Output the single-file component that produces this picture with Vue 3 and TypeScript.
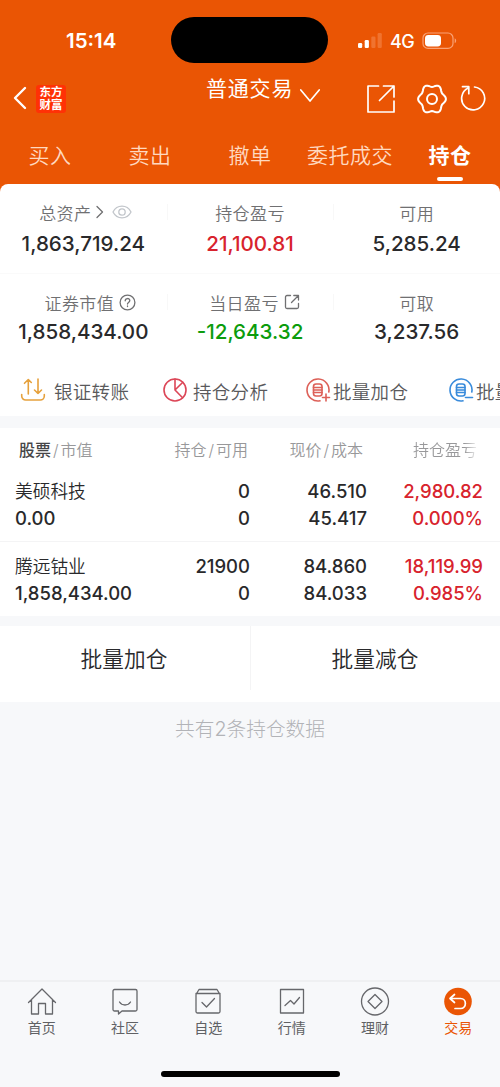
<script setup lang="ts">
interface Metric { label: string; value: string; tone?: string; icon?: string }
interface Holding { name: string; marketValue: string; qty: string; usable: string; price: string; cost: string; profit: string; rate: string }

const tabs: string[] = ['买入', '卖出', '撤单', '委托成交', '持仓']
const activeTab = '持仓'

const metricRows: Metric[][] = [
  [
    { label: '总资产', value: '1,863,719.24', icon: 'eye' },
    { label: '持仓盈亏', value: '21,100.81', tone: 'up' },
    { label: '可用', value: '5,285.24' },
  ],
  [
    { label: '证券市值', value: '1,858,434.00', icon: 'help' },
    { label: '当日盈亏', value: '-12,643.32', tone: 'down', icon: 'share' },
    { label: '可取', value: '3,237.56' },
  ],
]

const actions = [
  { label: '银证转账', icon: 'transfer' },
  { label: '持仓分析', icon: 'pie' },
  { label: '批量加仓', icon: 'plus' },
  { label: '批量减仓', icon: 'minus' },
]

const holdings: Holding[] = [
  { name: '美硕科技', marketValue: '0.00', qty: '0', usable: '0', price: '46.510', cost: '45.417', profit: '2,980.82', rate: '0.000%' },
  { name: '腾远钴业', marketValue: '1,858,434.00', qty: '21900', usable: '0', price: '84.860', cost: '84.033', profit: '18,119.99', rate: '0.985%' },
]

const nav = ['首页', '社区', '自选', '行情', '理财', '交易']

// Six rounded teeth around the settings wheel
const gearPath = 'M' + Array.from({ length: 72 }, (_, i) => {
  const a = (i / 72) * Math.PI * 2
  const r = 12.6 + 1.3 * Math.cos(6 * a)
  return `${(15 + r * Math.cos(a)).toFixed(2)} ${(15 + r * 1.07 * Math.sin(a)).toFixed(2)}`
}).join('L') + 'Z'
</script>

<template>
  <div class="screen">
    <header class="top">
      <div class="status">
        <span class="time">15:14</span>
        <span class="island"></span>
        <div class="signals">
          <svg width="26" height="18" viewBox="0 0 26 18">
            <rect x="1" y="11" width="4.2" height="5" rx="1.2" fill="#fff" />
            <rect x="7.7" y="8" width="4.2" height="8" rx="1.2" fill="#fff" />
            <rect x="14.3" y="4.5" width="4.2" height="11.5" rx="1.2" fill="#f0732f" />
            <rect x="20.6" y="1" width="4.2" height="15" rx="1.2" fill="#f0732f" />
          </svg>
          <span class="net">4G</span>
          <svg width="36" height="18" viewBox="0 0 36 18">
            <rect x="1" y="1" width="30" height="15.4" rx="5" fill="none" stroke="#f9a276" stroke-width="1.2" />
            <rect x="3" y="3" width="16" height="11.4" rx="3.4" fill="#fff" />
            <path d="M32.7 6.3c2 1 2 4 0 5z" fill="#f9a276" />
          </svg>
        </div>
      </div>

      <div class="titlebar">
        <svg class="back" width="14" height="24" viewBox="0 0 14 24"><path d="M12 2 2 12l10 10" /></svg>
        <span class="logo">东方<br>财富</span>
        <div class="title">
          <span>普通交易</span>
          <svg width="22" height="16" viewBox="0 0 22 16"><path d="m1.8 2 9.2 11 9.2-11" /></svg>
        </div>
        <svg class="i-share" width="30" height="30" viewBox="0 0 30 30"><path d="M12.5 2H2v26h26V17M17.5 2H28v11M28 2 13.500 16.500" /></svg>
        <svg class="i-gear" width="30" height="30" viewBox="0 0 30 30">
          <path :d="gearPath" />
          <circle cx="15" cy="15" r="5" />
        </svg>
        <svg class="i-refresh" width="28" height="28" viewBox="0 0 28 28"><path d="M15.500 3A11.500 11.500 0 1 1 9.300 4M3.500 2.700h6.300v7" /></svg>
      </div>

      <nav class="tabs">
        <span v-for="t in tabs" :key="t" class="tab" :class="{ active: t === activeTab }">{{ t }}</span>
      </nav>
    </header>

    <main>
      <section class="assets">
        <div v-for="(row, i) in metricRows" :key="i" class="metric-row">
          <div v-for="m in row" :key="m.label" class="metric">
            <div class="label" :class="m.icon">
              <span>{{ m.label }}</span>
              <template v-if="m.icon === 'eye'">
                <svg class="arrow" width="8" height="14" viewBox="0 0 8 14"><path d="m1 1.500 5.500 5.500L1 12.500" /></svg>
                <svg class="eye-mark" width="20" height="14" viewBox="0 0 20 14"><path d="M1 7c4-7.800 14-7.800 18 0-4 7.800-14 7.800-18 0z" /><circle cx="10" cy="7" r="3.200" /></svg>
              </template>
              <svg v-if="m.icon === 'help'" class="mark" width="17" height="17" viewBox="0 0 17 17"><circle cx="8.500" cy="8.500" r="7.400" /><path d="M6.200 6.800c0-3 4.600-3 4.600-.2 0 1.800-2.300 1.800-2.300 3.400M8.500 12v.6" /></svg>
              <svg v-if="m.icon === 'share'" class="mark" width="16" height="16" viewBox="0 0 16 16"><path d="M6.500 1.500H3A1.500 1.500 0 0 0 1.500 3v10A1.500 1.500 0 0 0 3 14.500h10a1.500 1.500 0 0 0 1.500-1.500V9.500M9.800 1.500h4.700v4.500M14.500 1.500 7.500 8.500" /></svg>
            </div>
            <div class="value" :class="m.tone">{{ m.value }}</div>
          </div>
        </div>
        <div class="actions">
          <div v-for="a in actions" :key="a.label" class="action" :class="a.icon">
            <svg width="26" height="26" viewBox="0 0 26 26">
              <template v-if="a.icon === 'transfer'">
                <path d="M1.700 17.500v1.500a4 4 0 0 0 4 4h14.600a4 4 0 0 0 4-4v-1.500M8.300 17V2.500M4.500 6.300l3.800-3.800 3 3M18 2v14.500M14.500 13l3.500 3.500 3.500-3.500" />
              </template>
              <template v-else-if="a.icon === 'pie'">
                <circle cx="13" cy="13" r="11" /><path d="M13 2v11l7.600 7.800M13 13l7.800-7.800" />
              </template>
              <template v-else>
                <path d="M15 23.800A11 11 0 1 1 23.800 15" />
                <rect x="8.500" y="7" width="8.500" height="12" rx="2.500" /><path d="M8.500 10.500h8.500M8.500 13h8.500M8.500 15.500h8.500" />
                <path :d="a.icon === 'plus' ? 'M17.500 20.500h7M21 17v7' : 'M17.500 20.500h7'" />
              </template>
            </svg>
            <span>{{ a.label }}</span>
          </div>
        </div>
      </section>

      <section class="table">
        <div class="thead">
          <span><b>股票</b><i>/</i>市值</span>
          <span>持仓<i>/</i>可用</span>
          <span>现价<i>/</i>成本</span>
          <span class="fade">持仓盈亏</span>
        </div>
        <div v-for="h in holdings" :key="h.name" class="holding">
          <span class="name">{{ h.name }}</span><span>{{ h.qty }}</span><span>{{ h.price }}</span><span class="up">{{ h.profit }}</span>
          <span class="left">{{ h.marketValue }}</span><span>{{ h.usable }}</span><span>{{ h.cost }}</span><span class="up">{{ h.rate }}</span>
        </div>
      </section>

      <section class="batch">
        <div>批量加仓</div>
        <div>批量减仓</div>
      </section>
      <p class="count">共有2条持仓数据</p>
    </main>

    <footer class="bottom">
      <div class="nav">
        <div v-for="(n, i) in nav" :key="n" class="nav-item" :class="{ current: i === 5 }">
          <svg width="30" height="30" viewBox="0 0 30 30">
            <path v-if="i === 0" d="M1.500 15.500 15 2l13.500 13.500M4.500 12.500V27h7V16.500h7V27h7V12.500" />
            <path v-else-if="i === 1" d="M4.500 2.500h21a1.500 1.500 0 0 1 1.500 1.500v18.500a1.500 1.500 0 0 1-1.500 1.500H12l-3.500 3v-3h-4A1.500 1.500 0 0 1 3 22.500V4a1.500 1.500 0 0 1 1.500-1.500zM9.500 15c2.500 4 8.500 4 11 0" />
            <path v-else-if="i === 2" d="M3 7.500 6 2.500h18l3 5M3 6.500h24V24.500a1.500 1.500 0 0 1-1.500 1.500h-21A1.500 1.500 0 0 1 3 24.500zM9 15.500l4.500 4.500 8-8.500" />
            <path v-else-if="i === 3" d="M3.500 2.500h23v23.500h-23zM8 18.500l5.500-5 3.500 3.500 5.500-6.500" />
            <template v-else-if="i === 4"><circle cx="15" cy="14.500" r="13.500" /><path d="m15 7.500 7 7-7 7-7-7z" /></template>
            <template v-else><circle class="disc" cx="15" cy="14.500" r="13.800" /><path class="turn" d="M11.500 7.500 7 11.500l4.500 4M7.500 11.500h10c6.500 0 6.500 10 0 10H12" /></template>
          </svg>
          <span>{{ n }}</span>
        </div>
      </div>
      <div class="home-bar"></div>
    </footer>
  </div>
</template>

<style>
body { margin: 0; background: #f7f8fa; }
</style>

<style scoped>
.screen { width: 500px; height: 1087px; display: flex; flex-direction: column; overflow: hidden; background: #f7f8fa; font-family: Inter, "Noto Sans CJK SC", sans-serif; color: #29292b; white-space: nowrap; }
svg { display: block; flex: none; fill: none; stroke-linecap: round; stroke-linejoin: round; }
.top { height: 192px; margin-bottom: -8px; background: #ea5504; color: #fff; }
.status { height: 64px; box-sizing: border-box; padding-top: 17px; display: flex; }
.time { width: 105px; padding-left: 66px; box-sizing: content-box; line-height: 48px; font-size: 20.500px; font-weight: 600; width: 105px; }
.island { width: 157px; height: 46px; border-radius: 23px; background: #000; }
.signals { display: flex; align-items: center; height: 48px; padding-left: 29px; }
.net { width: 26px; margin-left: 7px; margin-right: 6px; font-size: 18px; font-weight: 500; letter-spacing: -.5px; }
.titlebar { height: 66px; display: flex; align-items: center; }
.titlebar svg { stroke: #fff; stroke-width: 1.700; }
.titlebar .back { margin-left: 13px; margin-top: 2px; stroke-width: 2.400; }
.logo { width: 30px; height: 28px; margin: 3px 0 0 9px; border-radius: 3px; background: #ff3106; font-size: 11.500px; line-height: 13px; text-align: center; font-weight: 700; font-family: "Noto Sans CJK SC", sans-serif; }
.title { width: 115px; margin-left: 140px; margin-right: 1px; height: 48px; display: flex; align-items: center; justify-content: space-between; font-size: 21px; letter-spacing: .8px; }
.title span { margin-top: -21px; }
.title svg { margin-top: -2px; }
.i-share { margin: 4px 0 0 44px; }
.titlebar .i-gear { margin: 3px 0 0 21px; stroke-width: 2; }
.i-refresh { margin: 2px 0 0 12px; }
.tabs { height: 54px; display: grid; grid-template-columns: repeat(5, 100px); }
.tab { display: flex; flex-direction: column; align-items: center; line-height: 52px; font-size: 21px; letter-spacing: .5px; font-weight: 350; color: #ffd9c0; }
.tab.active { font-weight: 600; color: #fff; }
.tab.active::after { content: ""; width: 26px; height: 4px; border-radius: 2px; background: #fff; margin-top: -5px; }
.assets { height: 232px; background: #fff; border-radius: 8px 8px 0 0; overflow: hidden; }
.metric-row { height: 90px; box-sizing: border-box; display: grid; grid-template-columns: repeat(3, 1fr); padding-top: 15px; border-bottom: 1px solid #fafafa; }
.metric-row + .metric-row { height: 88px; border: 0; padding-top: 15px; }
.metric-row + .metric-row .value { margin-top: 0; }
.metric { display: flex; flex-direction: column; align-items: center; }
.metric + .metric { background: linear-gradient(#f8f8f8, #f8f8f8) 0 5px / 1px 16px no-repeat; }
.label { height: 26px; display: flex; align-items: center; font-size: 17px; letter-spacing: .4px; color: #707072; font-weight: 350; }
.label.eye { padding-left: 5px; }
.label.help { padding-left: 14px; }
.label.share { padding-left: 9px; }
.label svg { stroke: #707072; stroke-width: 1.300; }
.label .arrow { margin-left: 5px; }
.label .eye-mark { margin-left: 8px; stroke: #c2c6cb; }
.label .mark { margin-left: 5px; }
.value { height: 34px; line-height: 34px; margin-top: 2px; font-size: 20.600px; font-weight: 500; }
.up, .value.up { color: #d8232d; }
.value.down { color: #0c9c0c; }
.actions { height: 54px; display: flex; padding: 1px 0 0 20px; box-sizing: border-box; }
.action { flex: none; width: 143px; height: 54px; display: flex; align-items: center; font-size: 18.500px; color: #59595b; font-weight: 350; letter-spacing: .3px; }
.action span { margin-top: 2px; }
.action svg { stroke-width: 1.600; margin-right: 2px; }
.action.transfer { width: 142px; } .action.transfer svg { margin-right: 8px; stroke: #e6a13c; }
.action.pie svg { stroke: #dc4657; margin-right: 5px; }
.action.plus svg { stroke: #dd6058; }
.action.minus svg { stroke: #398bdb; }
.table { margin-top: 12px; height: 188px; background: #fff; }
.thead, .holding { display: grid; grid-template-columns: 118px 117px 117px 116px; padding-left: 15px; text-align: right; }
.thead { height: 44px; line-height: 45px; font-size: 16px; color: #98989a; font-weight: 350; }
.thead span { padding-right: 2px; }
.thead span:nth-child(3) { padding-right: 4px; }
.thead span:first-child { text-align: left; padding: 0 0 0 4px; }
.thead b { font-weight: 500; color: #454547; }
.thead i { font-style: normal; margin: 0 2px; }
.thead .fade { padding-right: 6px; background: linear-gradient(90deg, #98989a 84%, #f0f0f0 95%); background-clip: text; -webkit-background-clip: text; color: transparent; }
.holding { height: 63px; grid-template-rows: 27px 27px; line-height: 27px; padding-top: 6px; font-size: 18.500px; font-weight: 500; }
.holding + .holding { border-top: 1px solid #f4f4f5; height: 63px; padding-top: 11px; }
.name { text-align: left; font-size: 17.700px; font-weight: 350; }
.left { text-align: left; }
.batch { margin-top: 10px; height: 76px; background: #fff; display: grid; grid-template-columns: 1fr 1fr; font-size: 21.700px; line-height: 67px; text-align: center; font-weight: 350; }
.batch div:first-child { padding-right: 2px; }
.batch div + div { background: linear-gradient(#f4f4f5, #f4f4f5) 0 0 / 1px 64px no-repeat; }
.count { margin: 0; height: 52px; line-height: 55px; text-align: center; font-size: 19.700px; color: #b2b3b7; font-weight: 300; }
.bottom { margin-top: auto; height: 107px; box-sizing: border-box; border-top: 2px solid #eff0f2; }
.nav { height: 89px; display: grid; grid-template-columns: repeat(6, 1fr); }
.nav-item { display: flex; flex-direction: column; align-items: center; padding-top: 5px; font-size: 14px; line-height: 21px; color: #606164; }
.nav-item svg { stroke: #66676b; stroke-width: 1.300; }
.nav-item .disc { fill: #ea5504; stroke: none; }
.nav-item .turn { stroke: #fff; stroke-width: 1.700; }
.nav-item.current { color: #ea5504; }
.home-bar { width: 179px; height: 6px; margin: 0 auto; border-radius: 3px; background: #000; }
</style>
